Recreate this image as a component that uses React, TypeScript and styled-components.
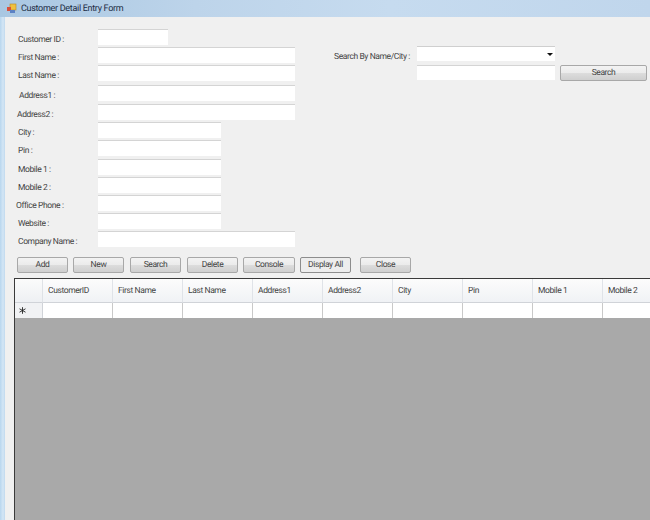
import React from "react";
import styled, { createGlobalStyle } from "styled-components";

const Global = createGlobalStyle`
  html, body { margin: 0; padding: 0; width: 650px; height: 520px; overflow: hidden; background: #f0f0f0; }
  * { box-sizing: border-box; }
`;

const Window = styled.div`
  width: 650px;
  height: 520px;
  display: flex;
  flex-direction: column;
  overflow: hidden;
  font-family: Roboto, "Liberation Sans", Arial, sans-serif;
  font-size: 8.5px;
  letter-spacing: -0.4px;
  color: #444;
  text-rendering: geometricPrecision;
  background: linear-gradient(90deg, #b8d6ee 0, #d4e6f5 3px, #c0d9ee 5px);
`;

const TitleBar = styled.div`
  height: 17px;
  flex: none;
  display: flex;
  align-items: center;
  gap: 4px;
  padding-left: 6px;
  background: linear-gradient(90deg, #a9c7e2 0, #bdd4ea 30%, #c6dbef 60%, #c0d6ec 100%);
  color: #1c2c44;
  font-size: 9px;
  letter-spacing: -0.3px;
`;

const Body = styled.div`
  flex: 1;
  min-height: 0;
  margin-left: 5px;
  background: #f0f0f0;
  display: flex;
  flex-direction: column;
`;

const Top = styled.div`
  display: flex;
  height: 240px;
  flex: none;
`;

const FormColumn = styled.div`
  width: 329px;
  flex: none;
  padding-top: 12px;
  display: flex;
  flex-direction: column;
`;

const Row = styled.div<{ $top: number }>`
  display: flex;
  align-items: center;
  height: 16px;
  margin-top: ${(p) => p.$top}px;
`;

const Label = styled.label<{ $x: number }>`
  width: 93px;
  flex: none;
  padding-top: 5px;
  padding-left: ${(p) => p.$x}px;
  white-space: nowrap;
`;

const Input = styled.div<{ $w: number }>`
  width: ${(p) => p.$w}px;
  height: 16px;
  flex: none;
  background: #fff;
  border-top: 1px solid #d4d4d4;
`;

const SearchColumn = styled.div`
  padding-top: 29px;
  display: flex;
  flex-direction: column;
  gap: 4px;
`;

const SearchRow = styled.div`
  display: flex;
  align-items: center;
  height: 15px;
`;

const SearchLabel = styled.label`
  width: 83px;
  flex: none;
  padding-top: 6px;
  white-space: nowrap;
`;

const Select = styled.div`
  width: 138px;
  height: 15px;
  background: #fff;
  border-top: 1px solid #cfcfcf;
  display: flex;
  align-items: center;
  justify-content: flex-end;
  padding-right: 2px;
`;

const Caret = styled.span`
  width: 0;
  height: 0;
  border-left: 3px solid transparent;
  border-right: 3px solid transparent;
  border-top: 3px solid #111;
`;

const SearchInput = styled(Input)`
  margin-left: 83px;
  height: 15px;
`;

const Button = styled.div<{ $w: number; $ml: number; $light?: boolean }>`
  width: ${(p) => p.$w}px;
  height: 16px;
  margin-left: ${(p) => p.$ml}px;
  flex: none;
  display: flex;
  align-items: center;
  justify-content: center;
  border: 1px solid ${(p) => (p.$light ? "#8d8d8d" : "#a8a8a8")};
  border-radius: 2px;
  background: ${(p) =>
    p.$light
      ? "#ededed"
      : "linear-gradient(180deg, #f3f3f3 0, #ebebeb 48%, #dcdcdc 52%, #cfcfcf 100%)"};
  color: #444;
`;

const ButtonBar = styled.div`
  display: flex;
  height: 16px;
  flex: none;
  padding-left: 12px;
`;

const Grid = styled.div`
  margin: 5px 0 0 9px;
  flex: 1;
  min-height: 0;
  background: #a9a9a9;
  border-top: 1px solid #3a3a3a;
  border-left: 1px solid #3a3a3a;
  overflow: hidden;
`;

const GridRow = styled.div<{ $h: number }>`
  display: flex;
  height: ${(p) => p.$h}px;
  width: 660px;
`;

const HeaderCorner = styled.div`
  width: 28px;
  flex: none;
  background: linear-gradient(180deg, #fbfbfb, #eef0f3);
  border-right: 1px solid #dfe2e6;
  border-bottom: 1px solid #d0d3d8;
`;

const HeaderCell = styled.div`
  width: 70px;
  flex: none;
  display: flex;
  align-items: center;
  padding-left: 5px;
  background: linear-gradient(180deg, #fcfcfc, #f0f2f5);
  border-right: 1px solid #e0e3e8;
  border-bottom: 1px solid #d0d3d8;
`;

const RowHeader = styled.div`
  width: 28px;
  flex: none;
  background: #f1f2f4;
  border-right: 1px solid #d0d3d8;
  display: flex;
  align-items: center;
  padding-left: 4px;
`;

const DataCell = styled.div`
  width: 70px;
  flex: none;
  background: #fff;
  border-right: 1px solid #c9c9c9;
`;

const fields: [string, number, number, number][] = [
  ["Customer ID :", 13, 70, 0],
  ["First Name :", 13, 197, 2],
  ["Last Name :", 13, 197, 2],
  ["Address1 :", 14, 197, 4],
  ["Address2 :", 12, 197, 3],
  ["City :", 13, 123, 2],
  ["Pin :", 13, 123, 2],
  ["Mobile 1 :", 13, 123, 3],
  ["Mobile 2 :", 13, 123, 2],
  ["Office Phone :", 11, 123, 2],
  ["Website :", 13, 123, 2],
  ["Company Name :", 13, 197, 2],
];

const buttons: [string, number, number, boolean?][] = [
  ["Add", 51, 0],
  ["New", 51, 5],
  ["Search", 51, 6],
  ["Delete", 51, 6],
  ["Console", 52, 5],
  ["Display All", 51, 5, true],
  ["Close", 51, 9],
];

const columns = ["CustomerID", "First Name", "Last Name", "Address1", "Address2", "City", "Pin", "Mobile 1", "Mobile 2"];

const AppIcon = () => (
  <svg width="11" height="11" viewBox="0 0 11 11">
    <rect x="4" y="1" width="6" height="6" fill="#f0c040" stroke="#b98a20" strokeWidth="0.6" />
    <rect x="1" y="4" width="4" height="4" fill="#d9503c" />
    <rect x="4" y="7" width="5" height="3" fill="#5c82c4" />
  </svg>
);

const NewRowGlyph = () => (
  <svg width="7" height="7" viewBox="0 0 7 7">
    <path d="M3.5 0.2V6.8M0.5 1.8L6.5 5.2M0.5 5.2L6.5 1.8" stroke="#222" strokeWidth="0.9" fill="none" />
  </svg>
);

export default function App() {
  return (
    <Window>
      <Global />
      <TitleBar>
        <AppIcon />
        <span>Customer Detail Entry Form</span>
      </TitleBar>
      <Body>
        <Top>
          <FormColumn>
            {fields.map(([label, x, w, top]) => (
              <Row key={label} $top={top}>
                <Label $x={x}>{label}</Label>
                <Input $w={w} />
              </Row>
            ))}
          </FormColumn>
          <SearchColumn>
            <SearchRow>
              <SearchLabel>Search By Name/City :</SearchLabel>
              <Select>
                <Caret />
              </Select>
            </SearchRow>
            <SearchRow>
              <SearchInput $w={138} />
              <Button $w={87} $ml={5}>Search</Button>
            </SearchRow>
          </SearchColumn>
        </Top>
        <ButtonBar>
          {buttons.map(([label, w, ml, light]) => (
            <Button key={label} $w={w} $ml={ml} $light={light}>{label}</Button>
          ))}
        </ButtonBar>
        <Grid>
          <GridRow $h={24}>
            <HeaderCorner />
            {columns.map((c) => (
              <HeaderCell key={c}>{c}</HeaderCell>
            ))}
          </GridRow>
          <GridRow $h={15}>
            <RowHeader>
              <NewRowGlyph />
            </RowHeader>
            {columns.map((c) => (
              <DataCell key={c} />
            ))}
          </GridRow>
        </Grid>
      </Body>
    </Window>
  );
}
